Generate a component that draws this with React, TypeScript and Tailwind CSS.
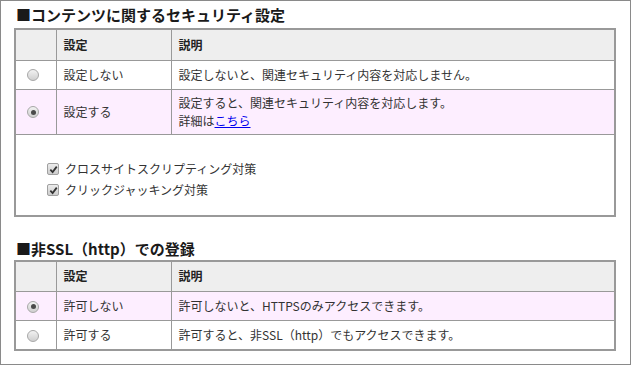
import React from 'react';

const font = { fontFamily: '"Noto Sans CJK JP", "Noto Sans", sans-serif' };

const Radio: React.FC<{ checked?: boolean }> = ({ checked }) => (
    <span className="inline-flex w-[12px] h-[12px] rounded-full border border-[#a8a8a8] bg-gradient-to-b from-[#f2f2f2] to-[#cfcfcf] items-center justify-center align-middle">
        {checked && <span className="w-[5px] h-[5px] rounded-full bg-[#4a4a4a]" />}
    </span>
);

const Check: React.FC = () => (
    <span className="inline-flex w-[12px] h-[12px] rounded-[2px] border border-[#a0a0a0] bg-gradient-to-b from-[#ececec] to-[#cdcdcd] items-center justify-center">
        <svg width="9" height="9" viewBox="0 0 10 10">
            <path d="M1.5 5.2 L4 7.8 L8.6 1.8" fill="none" stroke="#333" strokeWidth="2" />
        </svg>
    </span>
);

interface Row { label: string; desc: React.ReactNode; checked: boolean; }

const SettingTable: React.FC<{ rows: Row[]; extra?: React.ReactNode }> = ({ rows, extra }) => (
    <table className="w-[602px] border-collapse border-2 border-[#999] text-[12px] leading-[18px] text-[#333]">
        <tbody>
            <tr className="bg-[#eeeeee] h-[31px]">
                <td className="w-[41px] border border-[#999]" />
                <td className="w-[115px] border border-[#999] pl-[7px] font-bold text-[#222]">設定</td>
                <td className="border border-[#999] pl-[7px] font-bold text-[#222]">説明</td>
            </tr>
            {rows.map(r => (
                <tr key={r.label} className={`h-[29px] ${r.checked ? 'bg-[#fdeeff]' : 'bg-white'}`}>
                    <td className="border border-[#999] pl-[11px] leading-none"><Radio checked={r.checked} /></td>
                    <td className="border border-[#999] pl-[7px]">{r.label}</td>
                    <td className="border border-[#999] pl-[7px] py-[4px]">{r.desc}</td>
                </tr>
            ))}
            {extra && (
                <tr>
                    <td colSpan={3} className="border border-[#999] pl-[31px] pt-[24px] pb-[14px]">{extra}</td>
                </tr>
            )}
        </tbody>
    </table>
);

export default function App() {
    return (
        <div className="w-[631px] h-[365px] border border-[#8a8a8a] bg-white pl-[13px]" style={font}>
            {/* コンテンツのセキュリティ */}
            <h2 className="mt-[3px] h-[22px] leading-[22px] text-[15px] font-bold text-[#1a1a1a] pl-[2px]">■コンテンツに関するセキュリティ設定</h2>
            <div className="mt-[2px]">
                <SettingTable
                    rows={[
                        { label: '設定しない', desc: '設定しないと、関連セキュリティ内容を対応しません。', checked: false },
                        {
                            label: '設定する',
                            checked: true,
                            desc: (
                                <>
                                    設定すると、関連セキュリティ内容を対応します。<br />
                                    詳細は<a href="#" className="text-[#0000ee] underline">こちら</a>
                                </>
                            ),
                        },
                    ]}
                    extra={
                        <div className="flex flex-col">
                            {['クロスサイトスクリプティング対策', 'クリックジャッキング対策'].map(t => (
                                <label key={t} className="flex items-center gap-[6px] h-[21px]">
                                    <Check />
                                    <span>{t}</span>
                                </label>
                            ))}
                        </div>
                    }
                />
            </div>

            {/* 非SSL */}
            <h2 className="mt-[21px] h-[22px] leading-[22px] text-[15px] font-bold text-[#1a1a1a] pl-[2px]">■非SSL（http）での登録</h2>
            <SettingTable
                rows={[
                    { label: '許可しない', desc: '許可しないと、HTTPSのみアクセスできます。', checked: true },
                    { label: '許可する', desc: '許可すると、非SSL（http）でもアクセスできます。', checked: false },
                ]}
            />
        </div>
    );
}
